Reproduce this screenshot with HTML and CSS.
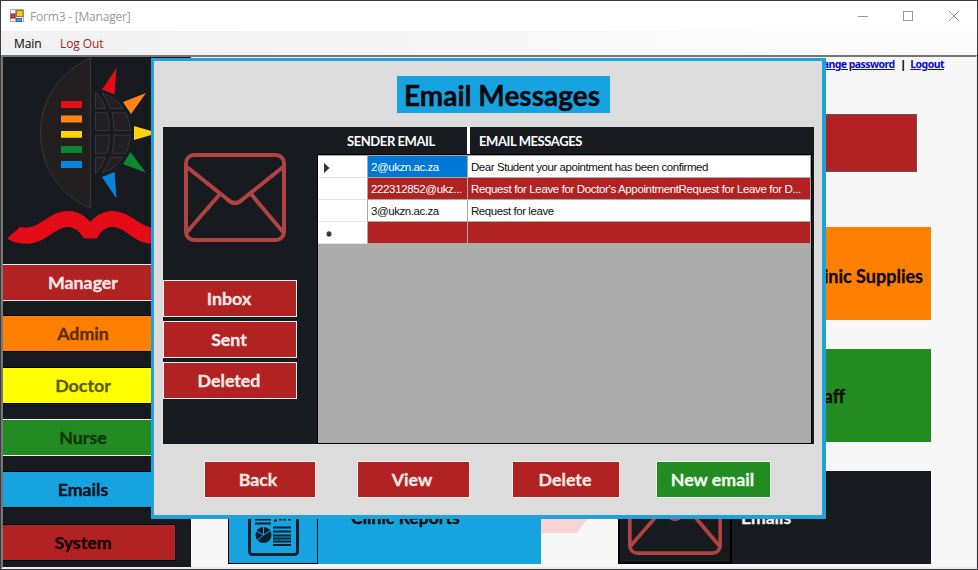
FILE: index.html
```html
<!DOCTYPE html>
<html lang="en">
<head>
<meta charset="utf-8">
<title>Form3 - [Manager]</title>
<link rel="stylesheet" href="styles.css">
</head>
<body>
<svg width="0" height="0" class="defs">
  <symbol id="envelope" viewBox="0 0 102 89">
    <g fill="none" stroke="#b04442" stroke-width="4">
      <rect x="2" y="2" width="98" height="85" rx="8"/>
      <path d="M3 14 L43 46 Q51 54 59 46 L99 14M3 79 L36 41M99 79 L67 41"/>
    </g>
  </symbol>
</svg>
<div class="window">
  <header class="titlebar">
    <svg class="appicon" width="14" height="14" viewBox="0 0 14 14">
      <path d="M.5 .5h5v12h-5zM5.500 .5h8v12h-8z" fill="#f4f4f4" stroke="#aaa"/>
      <rect x="6.500" y="1.500" width="6.500" height="6" fill="#f2c535" stroke="#a27912"/>
      <rect x="1" y="5" width="4" height="4" fill="#cf4a42" stroke="#8d211c"/>
      <rect x="6.500" y="9.500" width="5" height="3" fill="#5b94e0" stroke="#2e67bb"/>
    </svg>
    <span class="caption">Form3 - [Manager]</span>
    <svg class="controls" width="104" height="12" viewBox="0 0 104 12" fill="none" stroke="#999">
      <path d="M0 6.500h10M91 1l10 10M101 1l-10 10"/><rect x="45.500" y="1.500" width="9" height="9"/>
    </svg>
  </header>
  <nav class="menu"><span class="m1">Main</span><span class="m2">Log Out</span></nav>
  <div class="client">
    <aside class="sidebar">
      <svg class="logo" width="188" height="206" viewBox="3 57 188 206">
        <g fill="#231f20" stroke="#3b3e42" stroke-width=".8">
          <path d="M90.500 58C57 74 40.500 101 40.500 133C40.500 167 60 196 90.500 208Z"/>
          <path d="M95.500 92.500Q103 100 105.500 108.500H95.500ZM95.500 112.700H107Q109.500 122 109.500 130.500H95.500ZM95.500 135.200H109.500Q109.500 145 107 153.300H95.500ZM95.500 157.300H105.500Q102 167 95.500 173.500Z"/>
          <path d="M102.500 93.500Q116 97 123 108.500H110.500Q108 101 102.500 93.500ZM112 112.700H125.500Q130 121 130.500 130.500H114Q114 121 112 112.700ZM114 135.200H130.500Q130 146 125.500 153.300H112Q114 145 114 135.200ZM110.500 157.300H123Q115 169 102.500 172.500Q108 165 110.500 157.300Z"/>
        </g>
        <g fill="#e50b17"><path d="M61 101h21v7h-21zM102 89.500L116.500 68L114.500 94.500Z"/>
          <path d="M7 238.500L20 227C38 232 48 211 68 211C79 211 86 217 90.300 222C95 216 103 211 112 211C130 211 138 226 154 228V243.500C134 245 127 227 112 227C104 227 99 234 97 238.500H84C80 232 75 227 68 227C55 227 46 243.500 27 243.700C19 243.700 12 242 7 238.500Z"/></g>
        <path fill="#ff8519" d="M61 115.500h21v7h-21zM123 102L146 93L131 114Z"/>
        <path fill="#ffd20c" d="M61 131h21v6.700h-21zM134 126V140L158 133Z"/>
        <path fill="#08882f" d="M61 146h21v7h-21zM130.500 152L123 164L146 172.700Z"/>
        <path fill="#0884df" d="M61 161h21v7h-21zM102 177L114.500 172L116.500 198.500Z"/>
      </svg>
      <div class="nav">
        <div class="btn red white">Manager</div>
        <div class="btn orange">Admin</div>
        <div class="btn yellow">Doctor</div>
        <div class="btn green lined">Nurse</div>
        <div class="btn blue">Emails</div>
        <div class="btn red dark">System</div>
      </div>
    </aside>
    <main class="main">
      <div class="links"><a>Change password</a><b>|</b><a>Logout</a></div>
      <div class="cards">
        <div></div><div class="card profile"></div>
        <div></div><div class="card orange supplies">Clinic Supplies</div>
        <div></div><div class="card green staff">Staff</div>
        <div class="card blue"><span class="tile report"><svg width="51" height="68" viewBox="0 0 51 68">
            <rect x="1.500" y="1.500" width="48" height="65" rx="3" fill="none" stroke="#041f2c" stroke-width="3"/>
            <circle cx="15.500" cy="47" r="8" fill="#041f2c"/>
            <path d="M15.500 47V38M15.500 47L9 53M15.500 47L8 43M15.500 47L22 43" stroke="#17a3e0" stroke-width="1"/>
            <path d="M7 31.500h16M7 35.500h16M25 39.500h18M25 43.500h18M25 47.500h18M25 50.500h18M25 53.500h18M25 57h18M26 32.500h3M31 31.500h3M35 31.500h3M40 31.500h3" stroke="#041f2c" stroke-width="2"/>
          </svg></span><span class="name">Clinic Reports</span></div>
        <div class="card black"><span class="tile mail"><svg width="94" height="82" preserveAspectRatio="none" viewBox="0 0 102 89"><use href="#envelope" width="102" height="89"/></svg></span><span class="name">Emails</span></div>
      </div>
      <svg class="mark" width="50" height="20" viewBox="0 0 50 20"><path d="M0 0H50L36 19H0Z" fill="#f7d3d5"/></svg>
    </main>
    <section class="dialog">
      <h1>Email Messages</h1>
      <div class="panel">
        <div class="folders">
          <svg width="102" height="89"><use href="#envelope"/></svg>
          <div class="btn red white">Inbox</div>
          <div class="btn red white">Sent</div>
          <div class="btn red white">Deleted</div>
        </div>
        <div class="mails">
          <div class="heads"><span>SENDER EMAIL</span><span>EMAIL MESSAGES</span></div>
          <div class="gridbox">
            <div class="row"><i><svg width="6" height="10"><path d="M0 0L5.500 5L0 10Z" fill="#333"/></svg></i><span class="selected">2@ukzn.ac.za</span><span>Dear Student your apointment has been confirmed</span></div>
            <div class="row alt"><i></i><span>222312852@ukz...</span><span>Request for Leave for Doctor's AppointmentRequest for Leave for D...</span></div>
            <div class="row"><i></i><span>3@ukzn.ac.za</span><span>Request for leave</span></div>
            <div class="row alt"><i><svg class="star" width="8" height="8"><path d="M4 1v6M1 4h6M2 2l4 4M6 2l-4 4" stroke="#333" stroke-width="1.200"/></svg></i><span></span><span></span></div>
          </div>
        </div>
      </div>
      <div class="actions">
        <div class="btn red white back">Back</div><div class="btn red white view">View</div><div class="btn red white del">Delete</div><div class="btn green new">New email</div>
      </div>
    </section>
  </div>
</div>
</body>
</html>
```
FILE: styles.css
```css
* { box-sizing: border-box; }
body { margin: 0; width: 978px; height: 570px; overflow: hidden; background: #fff; font-family: Lato, sans-serif; }
.defs { position: absolute; }
.window { width: 978px; height: 570px; border: 1px solid #3c3a3d; display: flex; flex-direction: column; background: #f7f7f7; }
.titlebar { height: 30px; background: #fff; display: flex; align-items: center; padding: 0 15px 0 9px; }
.caption { font: 12px "Open Sans", sans-serif; color: #999; margin-left: 6px; letter-spacing: -.2px; }
.controls { margin-left: auto; }
.menu { height: 24px; display: flex; align-items: center; padding-left: 13px; font: 12px "Open Sans", sans-serif; letter-spacing: -.1px; background: linear-gradient(90deg, #f0f0f0, #fbfbfb 80%); }
.m1 { width: 46px; color: #000; }
.m2 { color: #a61e25; }
.client { position: relative; height: 514px; border: 2px solid; border-width: 2px 1px 2px 2px; border-color: #777 #e3e3e3 #ececec #777; display: flex; background: #f7f7f7; }
.sidebar { width: 188px; background: #171a1f; flex: none; }
.logo { display: block; }
.nav { display: grid; grid-template-rows: 51px 52px 52px 52px 53px 37px; width: 173px; margin-top: 1px; }
.btn { height: 37px; font-size: 17.800px; font-weight: 700; display: flex; align-items: center; justify-content: center; border: 1px solid #000; padding-bottom: 2px; -webkit-text-stroke: .3px; }
.nav .btn { border-left: 0; padding-right: 12px; }
.red { background: #b22222; }
.white { color: #f7e8e4; border-color: #f7efe9; }
.dark { color: #160404; }
.orange { background: #ff8000; color: #5c2d00; }
.yellow { background: #ff0; color: #5b5b00; }
.green { background: #228b22; color: #0a3608; }
.lined { border-color: #fff; }
.blue { background: #17a3e0; color: #041019; }
.main { flex: 1; }
.links { height: 14px; margin: 0 32px 0 0; display: flex; justify-content: flex-end; font: 700 10.500px/14px "Noto Sans", sans-serif; letter-spacing: -.55px; }
.links a { color: #0808d8; text-decoration: underline; }
.links b { margin: 0 5px 0 7px; }
.links a:first-child { margin-right: -1px; }
.cards { display: grid; grid-template-columns: 313px 313px; grid-template-rows: 84px 93px 93px 93px; gap: 29px 77px; margin: 43px 0 0 37px; }
.card { font-size: 17.600px; font-weight: 700; display: flex; align-items: center; color: #100a04; -webkit-text-stroke: .3px; }
.card.profile { height: 58px; width: 299px; background: #b22222; border: 1px solid #665354; }
.supplies { font-size: 18px; padding: 5px 8px 0 0; justify-content: flex-end; }
.staff { font-size: 18px; padding: 0 86px 0 0; justify-content: flex-end; }
.card.black { background: #171a1f; color: #f4f4f4; }
.name { padding-bottom: 1px; }
.tile { height: 93px; border: 1px solid #000; display: flex; align-items: end; flex: none; }
.report { width: 90px; padding: 0 0 7px 19px; margin-right: 33px; }
.mail { width: 114px; padding: 0 0 7px 8px; border-width: 2px; margin-right: 9px; }
.mark { position: absolute; left: 538px; top: 457px; }
.dialog { position: absolute; left: 148px; top: 1px; width: 675px; height: 461px; background: #dcdcdc; border: solid #1fa2d8; border-width: 3px 4px 4px 3px; padding: 15px 8px 0 9px; }
h1 { margin: 0 0 14px 234px; width: 213px; height: 37px; background: #17a3e0; font-size: 28px; line-height: 39px; text-align: center; color: #02080c; padding-right: 3px; white-space: nowrap; -webkit-text-stroke: .4px; }
.panel { height: 317px; width: 651px; background: #171a1f; display: flex; }
.folders { width: 154px; padding-top: 26px; }
.folders > svg { display: block; margin: 0 0 38px 21px; }
.folders .btn { width: 134px; margin-bottom: 4px; padding-right: 2px; }
.mails { width: 495px; }
.heads { height: 27px; display: flex; line-height: 29px; font-size: 13px; font-weight: 700; letter-spacing: -.42px; color: #fff; }
.heads span:first-child { width: 153px; padding-left: 30px; border-right: 3px solid #fff; }
.heads span:last-child { padding-left: 9px; }
.gridbox { height: 290px; background: #ababab; border: 1px solid #000; padding-top: 1px; }
.row { height: 22px; display: grid; grid-template-columns: 50px 100px 343px; font: 11.500px/22px "Liberation Sans", sans-serif; letter-spacing: -.44px; background: #fff; color: #111; }
.row > * { height: 22px; border-bottom: 1px solid #aaa; border-right: 1px solid #aaa; padding-left: 3px; white-space: nowrap; }
.row i { background: #fff; display: flex; align-items: center; padding: 3px 0 0 6px; border-bottom-color: #e3e3e3; }
.row .star { margin-left: 1px; }
.row .selected { background: #0078d7; color: #fff; }
.row.alt { background: #b22222; color: #fff; letter-spacing: -.36px; }
.actions { display: flex; margin-top: 17px; padding-left: 41px; }
.back { width: 112px; margin-right: 41px; padding-right: 4px; }
.view { width: 113px; margin-right: 42px; padding-right: 3px; }
.del { width: 108px; margin-right: 36px; padding-right: 2px; }
.new { width: 115px; color: #eef9ed; border-color: #eaf6e8; padding-right: 2px; }
```
